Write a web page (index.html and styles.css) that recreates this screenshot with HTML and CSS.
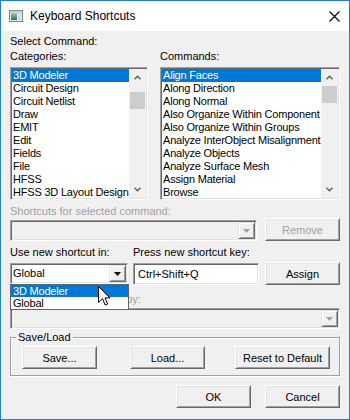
FILE: index.html
```html
<!DOCTYPE html>
<html>
<head>
    <title>Keyboard Shortcuts</title>
    <link rel="stylesheet" href="styles.css">
</head>
<body>
<div class="window">
    <div class="titlebar">
        <svg class="app-icon" width="14" height="12" viewBox="0 0 14 12">
            <defs>
                <linearGradient id="pane" x1="0" y1="0" x2="0" y2="1">
                    <stop offset="0" stop-color="#9ccbb4"/>
                    <stop offset="1" stop-color="#2f6f66"/>
                </linearGradient>
            </defs>
            <rect x="0.5" y="0.5" width="13" height="11" fill="#e9eceb" stroke="#7d8783"/>
            <rect x="1" y="1" width="12" height="2" fill="#c9d3d0"/>
            <rect x="2" y="3" width="6" height="7" fill="url(#pane)"/>
            <rect x="9" y="3" width="3" height="7" fill="#d7dedc"/>
        </svg>
        <span class="title">Keyboard Shortcuts</span>
        <svg class="close" width="11" height="11" viewBox="0 0 11 11">
            <path d="M0.5 0.5 L10.5 10.5 M10.5 0.5 L0.5 10.5" stroke="#000" stroke-width="1.1"/>
        </svg>
    </div>

    <div class="client">
        <div class="label">Select Command:</div>

        <div class="lists">
            <div>
                <div class="label">Categories:</div>
                <div class="listbox sunken">
                    <div class="items">
                        <div class="item selected">3D Modeler</div>
                        <div class="item">Circuit Design</div>
                        <div class="item">Circuit Netlist</div>
                        <div class="item">Draw</div>
                        <div class="item">EMIT</div>
                        <div class="item">Edit</div>
                        <div class="item">Fields</div>
                        <div class="item">File</div>
                        <div class="item">HFSS</div>
                        <div class="item">HFSS 3D Layout Design</div>
                    </div>
                    <div class="scrollbar">
                        <div class="sb-arrow">
                            <svg width="7" height="5" viewBox="0 0 7 5"><path d="M0.5 4.2 L3.5 1.2 L6.5 4.2" fill="none" stroke="#606060" stroke-width="1.5"/></svg>
                        </div>
                        <div class="sb-track"><div class="thumb thumb-cat"></div></div>
                        <div class="sb-arrow">
                            <svg width="7" height="5" viewBox="0 0 7 5"><path d="M0.5 0.8 L3.5 3.8 L6.5 0.8" fill="none" stroke="#606060" stroke-width="1.5"/></svg>
                        </div>
                    </div>
                </div>
            </div>
            <div>
                <div class="label">Commands:</div>
                <div class="listbox sunken">
                    <div class="items">
                        <div class="item selected">Align Faces</div>
                        <div class="item">Along Direction</div>
                        <div class="item">Along Normal</div>
                        <div class="item">Also Organize Within Component</div>
                        <div class="item">Also Organize Within Groups</div>
                        <div class="item">Analyze InterObject Misalignment</div>
                        <div class="item">Analyze Objects</div>
                        <div class="item">Analyze Surface Mesh</div>
                        <div class="item">Assign Material</div>
                        <div class="item">Browse</div>
                    </div>
                    <div class="scrollbar">
                        <div class="sb-arrow">
                            <svg width="7" height="5" viewBox="0 0 7 5"><path d="M0.5 4.2 L3.5 1.2 L6.5 4.2" fill="none" stroke="#606060" stroke-width="1.5"/></svg>
                        </div>
                        <div class="sb-track"><div class="thumb"></div></div>
                        <div class="sb-arrow">
                            <svg width="7" height="5" viewBox="0 0 7 5"><path d="M0.5 0.8 L3.5 3.8 L6.5 0.8" fill="none" stroke="#606060" stroke-width="1.5"/></svg>
                        </div>
                    </div>
                </div>
            </div>
        </div>

        <div class="label disabled gap-current">Shortcuts for selected command:</div>
        <div class="row row-current">
            <div class="combo sunken combo-off combo-wide">
                <div class="combo-text"></div>
                <div class="combo-btn">
                    <svg width="7" height="4" viewBox="0 0 7 4"><polygon points="0,0 7,0 3.5,4" fill="#a0a0a0"/></svg>
                </div>
            </div>
            <button type="button" class="btn" disabled>Remove</button>
        </div>

        <div class="row label-row">
            <div class="label use-label">Use new shortcut in:</div>
            <div class="label">Press new shortcut key:</div>
        </div>
        <div class="row row-new">
            <div class="combo sunken combo-scope">
                <div class="combo-text">Global</div>
                <div class="combo-btn">
                    <svg width="7" height="4" viewBox="0 0 7 4"><polygon points="0,0 7,0 3.5,4" fill="#000"/></svg>
                </div>
                <div class="dropdown">
                    <div class="drop-item selected">3D Modeler</div>
                    <div class="drop-item">Global</div>
                    <svg class="cursor" width="13" height="21" viewBox="0 0 13 21">
                        <path d="M0.5 0.5 L0.5 16.5 L4.5 12.7 L7.2 19 L9.6 18 L7 11.9 L12 11.9 Z" fill="#fff" stroke="#000" stroke-linejoin="round"/>
                    </svg>
                </div>
            </div>
            <div class="edit sunken">Ctrl+Shift+Q</div>
            <button type="button" class="btn">Assign</button>
        </div>

        <div class="label disabled gap-used">Shortcut currently used by:</div>
        <div class="combo sunken combo-off">
            <div class="combo-text"></div>
            <div class="combo-btn">
                <svg width="7" height="4" viewBox="0 0 7 4"><polygon points="0,0 7,0 3.5,4" fill="#a0a0a0"/></svg>
            </div>
        </div>

        <fieldset class="group">
            <legend>Save/Load</legend>
            <div class="group-buttons">
                <button type="button" class="btn">Save...</button>
                <button type="button" class="btn btn-load">Load...</button>
                <button type="button" class="btn btn-reset">Reset to Default</button>
            </div>
        </fieldset>

        <div class="row dialog-buttons">
            <button type="button" class="btn">OK</button>
            <button type="button" class="btn">Cancel</button>
        </div>
    </div>
</div>
</body>
</html>
```

FILE: styles.css
```css
body {
    margin: 0;
    font-family: "Liberation Sans", Arial, sans-serif;
    font-size: 11px;
    color: #000;
    background: #fff;
}
.window {
    width: 350px;
    height: 420px;
    box-sizing: border-box;
    border: 1px solid #1883d7;
    display: flex;
    flex-direction: column;
}
.titlebar {
    height: 30px;
    flex-shrink: 0;
    background: #fff;
    display: flex;
    align-items: center;
}
.app-icon {
    margin-left: 8px;
}
.title {
    flex: 1;
    margin-left: 7px;
    font-size: 12px;
}
.close {
    margin-right: 9px;
}
.client {
    flex: 1;
    background: #f0f0f0;
    padding: 4px 9px 0 9px;
}
.label {
    height: 13px;
    line-height: 13px;
    white-space: nowrap;
}
.disabled {
    color: #a0a0a0;
}

/* sunken 3d frame */
.sunken {
    box-sizing: border-box;
    border: 1px solid;
    border-color: #a0a0a0 #fff #fff #a0a0a0;
    padding: 1px;
    box-shadow: inset 1px 1px #696969, inset -1px -1px #e3e3e3;
}

/* lists */
.lists {
    display: grid;
    grid-template-columns: 138px 1fr;
    column-gap: 12px;
    margin-top: 2px;
}
.listbox {
    margin-top: 4px;
    height: 133px;
    background: #fff;
    display: flex;
}
.items {
    flex: 1;
    overflow: hidden;
}
.item {
    height: 13px;
    line-height: 13px;
    padding-left: 1px;
    letter-spacing: -0.2px;
    white-space: nowrap;
    overflow: hidden;
}
.selected {
    background: #0078d7;
    color: #fff;
}
.scrollbar {
    width: 17px;
    background: #f0f0f0;
    display: flex;
    flex-direction: column;
}
.sb-arrow {
    height: 17px;
    display: flex;
    align-items: center;
    justify-content: center;
}
.sb-track {
    flex: 1;
}
.thumb {
    margin: 0 1px;
    height: 17px;
    background: #cdcdcd;
}
.thumb-cat {
    margin-top: 6px;
}

/* rows */
.row {
    display: flex;
}
.gap-current {
    margin-top: 5px;
}
.row-current {
    height: 23px;
    align-items: flex-end;
    gap: 8px;
}
.label-row {
    margin-top: 5px;
}
.use-label {
    width: 123px;
}
.row-new {
    margin-top: 3px;
    height: 23px;
    align-items: center;
}
.gap-used {
    margin-top: 8px;
}

/* combo boxes */
.combo {
    height: 21px;
    display: flex;
    background: #fff;
    position: relative;
}
.combo-off {
    background: #f0f0f0;
    margin-top: 2px;
}
.row-current .combo-off {
    margin-top: 0;
}
.combo-wide {
    flex: 1;
}
.combo-scope {
    width: 118px;
}
.combo-text {
    flex: 1;
    line-height: 17px;
    padding-left: 1px;
}
.combo-btn {
    width: 17px;
    height: 17px;
    box-sizing: border-box;
    background: #f0f0f0;
    border: 1px solid;
    border-color: #e3e3e3 #696969 #696969 #e3e3e3;
    box-shadow: inset 1px 1px #fff, inset -1px -1px #a0a0a0;
    display: flex;
    align-items: center;
    justify-content: center;
}
.dropdown {
    position: absolute;
    left: -1px;
    top: calc(100% + 1px);
    width: 119px;
    box-sizing: border-box;
    border: 1px solid #646464;
    background: #fff;
    z-index: 2;
}
.drop-item {
    height: 12px;
    line-height: 12px;
    padding-left: 2px;
    letter-spacing: -0.2px;
}
.cursor {
    position: absolute;
    left: 87px;
    top: 1px;
}

.edit {
    width: 126px;
    height: 22px;
    margin-left: 5px;
    background: #fff;
    line-height: 18px;
    padding-left: 4px;
}
.row-new .btn {
    margin-left: 6px;
}

/* buttons */
.btn {
    width: 75px;
    height: 23px;
    box-sizing: border-box;
    padding: 0;
    font: inherit;
    color: #000;
    background: #f0f0f0;
    border: 1px solid;
    border-color: #fff #696969 #696969 #fff;
    box-shadow: inset 1px 1px #e3e3e3, inset -1px -1px #a0a0a0;
}
.btn:disabled {
    color: #a0a0a0;
}

/* save/load group */
.group {
    margin: 2px 0 0 0;
    padding: 2px 0 6px 0;
    border: 1px solid #a0a0a0;
    box-shadow: inset 1px 1px #fff, 1px 1px #fff;
    min-width: 0;
}
.group legend {
    margin-left: 5px;
    padding: 0 2px;
    line-height: 13px;
    background: #f0f0f0;
}
.group-buttons {
    display: flex;
    padding-left: 11px;
}
.btn-load {
    margin-left: 33px;
}
.btn-reset {
    width: 95px;
    margin-left: 30px;
}
.dialog-buttons {
    margin-top: 9px;
    justify-content: flex-end;
    gap: 14px;
}
```
